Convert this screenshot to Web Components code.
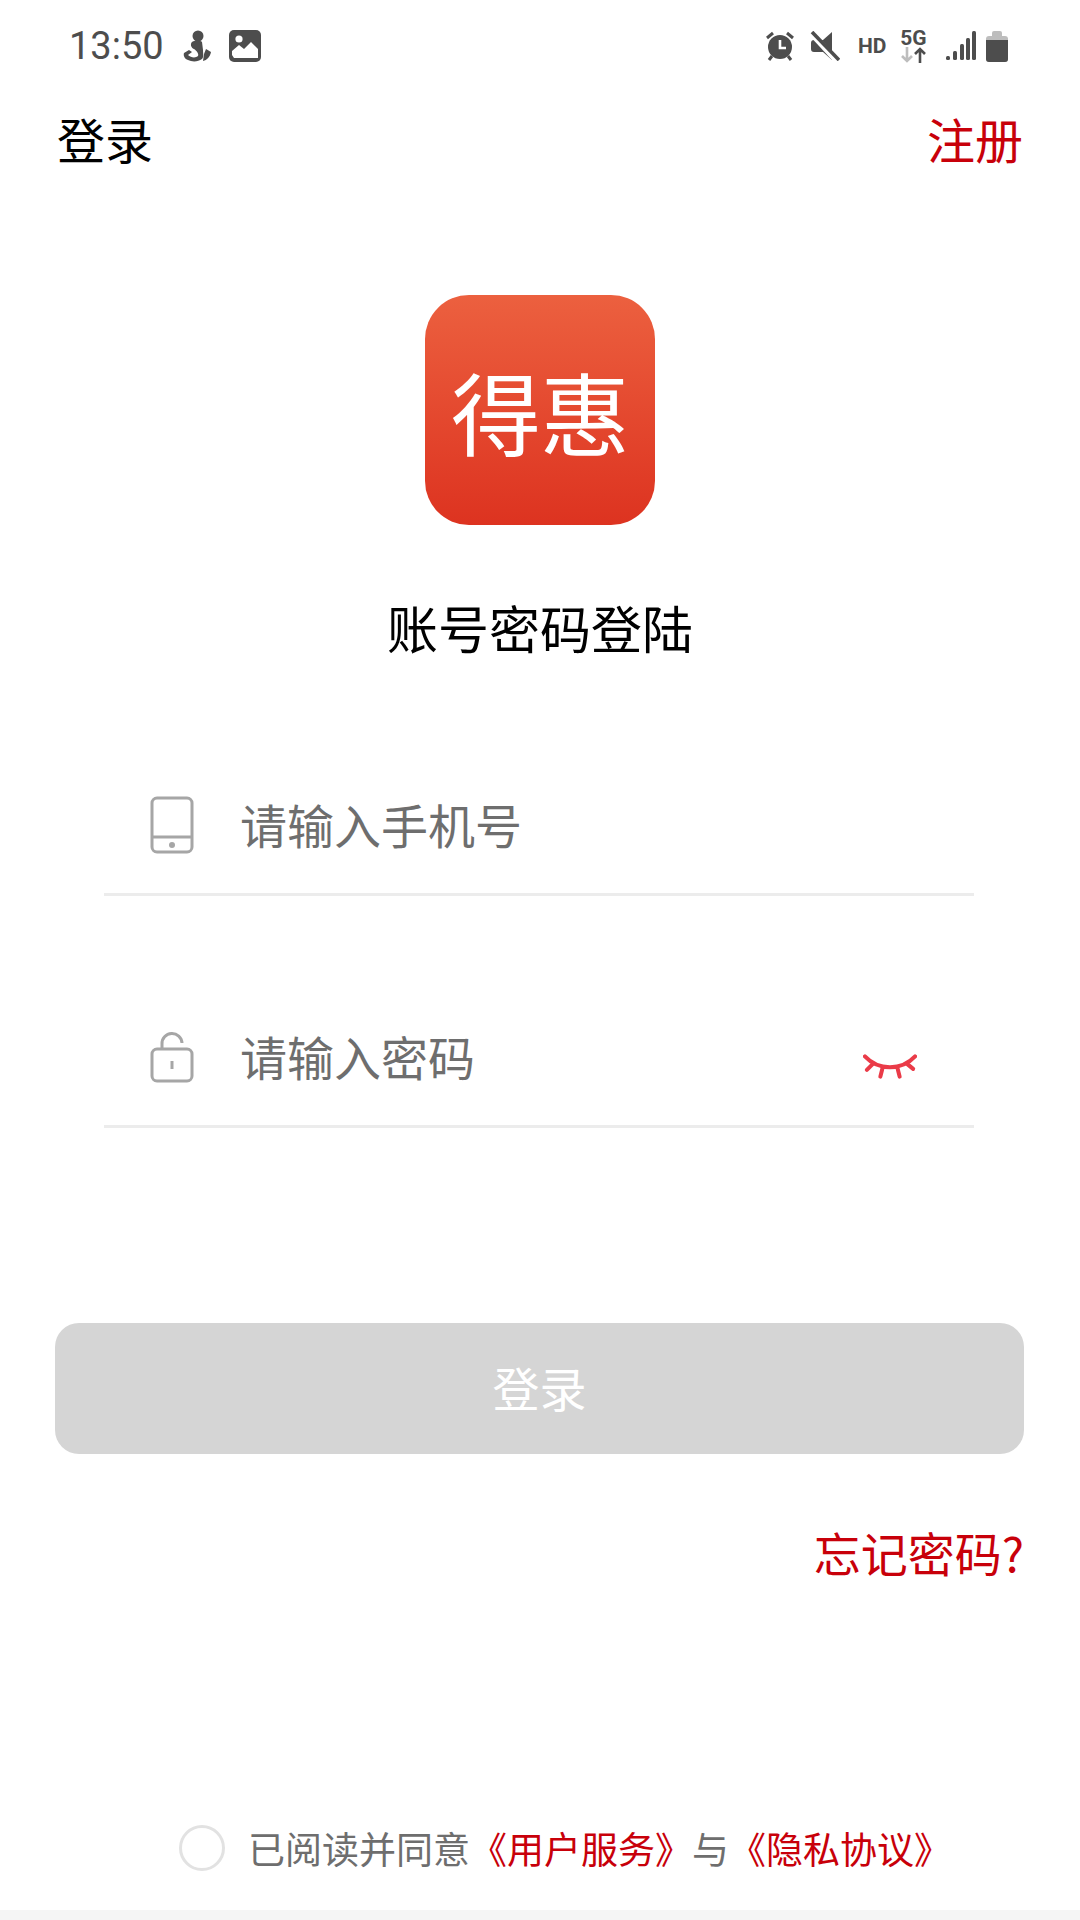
<!DOCTYPE html>
<html lang="zh">
<head>
<meta charset="utf-8">
<title>登录</title>
<style>
  html, body { margin: 0; padding: 0; background: #fff; }
  body { font-family: "Noto Sans CJK SC", "Noto Sans", sans-serif; text-spacing-trim: space-all; }
</style>
</head>
<body>
<login-page></login-page>

<script>
class StatusBar extends HTMLElement {
  constructor() {
    super();
    this.attachShadow({ mode: "open" });
    this.shadowRoot.innerHTML = `
      <style>
        :host { display: flex; align-items: center; height: 92px; padding: 0 72px 0 69px; color: #4d4d4d; box-sizing: border-box; }
        .time { font: 38px/44px Roboto, sans-serif; width: 96px; }
        svg { display: block; flex: none; }
        .left { display: flex; align-items: center; gap: 18px; }
        .right { display: flex; align-items: center; margin-left: auto; }
        .hd { font: bold 21px/20px Roboto, sans-serif; width: 28px; margin: 0 14px 0 18px; }
        .net { width: 27px; display: flex; flex-direction: column; align-items: center; margin-top: -1px; }
        .net b { font: bold 21px/18px Roboto, sans-serif; }
      </style>
      <div class="left">
        <span class="time">13:50</span>
        <svg width="28" height="32" viewBox="0 0 28 32" fill="#4d4d4d">
          <circle cx="15" cy="6" r="5.5"/>
          <path d="M9 12c3-2 8-2 10 0l1 8c0 4 1 7-1 9-4 3-10 3-14 1-3-1-5-4-4-7l5-3 3 2-4 3c3 3 8 3 10 1 1-2-1-5-4-7-3-1-4-5-2-7z"/>
          <path d="M21 24l2-5 5 3c-1 5-4 8-8 9z"/>
        </svg>
        <svg width="32" height="32" viewBox="0 0 32 32">
          <rect width="32" height="32" rx="5" fill="#4d4d4d"/>
          <circle cx="10" cy="9" r="3.6" fill="#fff"/>
          <path d="M3 25v-4l7-6 5 4 7-7 7 7v9H5z" fill="#fff"/>
        </svg>
      </div>
      <div class="right">
        <svg width="30" height="30" viewBox="0 0 30 30" fill="#4d4d4d">
          <circle cx="15" cy="16" r="12"/>
          <path d="M2 7l6-5M28 7l-6-5M7 25l-3 4M23 25l3 4" stroke="#4d4d4d" stroke-width="3" fill="none"/>
          <path d="M15 9v8h6" stroke="#fff" stroke-width="2.6" fill="none"/>
        </svg>
        <svg style="margin-left:15px" width="30" height="30" viewBox="0 0 30 30" fill="#4d4d4d">
          <path d="M22 1v28l-9-8H4q-3 0-3-3v-6q0-3 3-3h9z"/>
          <path d="M1 2l26 28" stroke="#fff" stroke-width="6"/>
          <path d="M2 1l27 28" stroke="#4d4d4d" stroke-width="3.6"/>
        </svg>
        <span class="hd">HD</span>
        <div class="net">
          <b>5G</b>
          <svg width="26" height="16" viewBox="0 0 26 16" fill="none" stroke-width="2.6">
            <path d="M6 0v14M1 9l5 5 5-5" stroke="#bdbdbd"/>
            <path d="M19 16V2M14 7l5-5 5 5" stroke="#4d4d4d"/>
          </svg>
        </div>
        <svg style="margin-left:19px" width="30" height="30" viewBox="0 0 30 30" fill="#4d4d4d">
          <rect x="0" y="25" width="4" height="4" rx="1.5"/>
          <rect x="7" y="20" width="4" height="9" rx="1.5"/>
          <rect x="14" y="13" width="4" height="16" rx="1.5"/>
          <rect x="20" y="7" width="4" height="22" rx="1.5"/>
          <rect x="26" y="0" width="4" height="29" rx="1.5"/>
        </svg>
        <svg style="margin-left:10px" width="22" height="32" viewBox="0 0 22 32">
          <path d="M6 3q0-2 2-2h6q2 0 2 2v3H6z" fill="#bdbdbd"/>
          <path d="M0 9q0-3 3-3h16q3 0 3 3v20q0 3-3 3H3q-3 0-3-3z" fill="#bdbdbd"/>
          <path d="M0 10h22v19q0 3-3 3H3q-3 0-3-3z" fill="#4d4d4d"/>
        </svg>
      </div>
    `;
  }
}

class AppHeader extends HTMLElement {
  constructor() {
    super();
    this.attachShadow({ mode: "open" });
    this.shadowRoot.innerHTML = `
      <style>
        :host { display: flex; justify-content: space-between; align-items: center; height: 96px; padding: 0 57px 5px 57px; box-sizing: border-box; font-size: 48px; color: #000; }
        .reg { color: #c8000a; }
      </style>
      <span>${this.getAttribute("title")}</span>
      <span class="reg">${this.getAttribute("action")}</span>
    `;
  }
}

class AppLogo extends HTMLElement {
  constructor() {
    super();
    this.attachShadow({ mode: "open" });
    this.shadowRoot.innerHTML = `
      <style>
        :host { display: flex; align-items: center; justify-content: center; width: 230px; height: 230px; border-radius: 44px;
          background: linear-gradient(#ec603f, #dd3320); color: #fff; font-size: 90px; line-height: 1; letter-spacing: -1px; }
      </style>
      <slot></slot>
    `;
  }
}

class LoginField extends HTMLElement {
  constructor() {
    super();
    this.attachShadow({ mode: "open" });
    this.shadowRoot.innerHTML = `
      <style>
        :host { display: flex; align-items: center; width: 870px; padding-left: 45px; border-bottom: 3px solid #ececec; box-sizing: border-box; height: 135px; color: #6e6e6e; font-size: 47px; }
        .icon { width: 46px; margin-right: 45px; display: flex; justify-content: center; margin-top: -5px; }
        .label { margin-top: -8px; }
        .tail { margin-left: auto; margin-right: 57px; display: flex; margin-top: 14px; }
      </style>
      <span class="icon"><slot name="icon"></slot></span>
      <span class="label">${this.getAttribute("placeholder")}</span>
      <span class="tail"><slot name="tail"></slot></span>
    `;
  }
}

class LoginButton extends HTMLElement {
  constructor() {
    super();
    this.attachShadow({ mode: "open" });
    this.shadowRoot.innerHTML = `
      <style>
        :host { display: flex; align-items: center; justify-content: center; width: 969px; height: 131px; padding-bottom: 5px; box-sizing: border-box; border-radius: 24px; background: #d5d5d5; color: #fff; font-size: 47px; }
      </style>
      <slot></slot>
    `;
  }
}

class AgreeLine extends HTMLElement {
  constructor() {
    super();
    this.attachShadow({ mode: "open" });
    this.shadowRoot.innerHTML = `
      <style>
        :host { display: flex; align-items: center; font-size: 37px; color: #6e6e6e; }
        .radio { width: 46px; height: 46px; border: 3px solid #e2e2e2; border-radius: 50%; box-sizing: border-box; margin-right: 23px; }
        em { font-style: normal; color: #c8000a; }
      </style>
      <span class="radio"></span>
      <span>已阅读并同意<em>《用户服务》</em>与<em>《隐私协议》</em></span>
    `;
  }
}

class LoginPage extends HTMLElement {
  constructor() {
    super();
    this.attachShadow({ mode: "open" });
    this.shadowRoot.innerHTML = `
      <style>
        :host { display: flex; flex-direction: column; align-items: center; width: 1080px; height: 1920px; background: #fff; overflow: hidden; }
        status-bar, app-header { align-self: stretch; }
        app-logo { margin-top: 107px; }
        .title { margin-top: 72px; font-size: 51px; line-height: 60px; color: #000; }
        .f1 { margin-top: 104px; align-self: flex-start; margin-left: 104px; }
        .f2 { margin-top: 97px; align-self: flex-start; margin-left: 104px; }
        login-button { margin-top: 195px; align-self: flex-start; margin-left: 55px; }
        .forgot { align-self: flex-end; margin: 70px 56px 0 0; font-size: 47px; line-height: 56px; color: #c8000a; }
        agree-line { margin-top: auto; margin-bottom: 35px; align-self: flex-start; margin-left: 179px; }
        .foot { align-self: stretch; height: 10px; background: #f5f5f5; flex: none; }
      </style>
      <status-bar></status-bar>
      <app-header title="登录" action="注册"></app-header>
      <app-logo>得惠</app-logo>
      <div class="title">账号密码登陆</div>
      <login-field class="f1" placeholder="请输入手机号">
        <svg slot="icon" width="44" height="58" viewBox="0 0 44 58" fill="none" stroke="#a6a6a6" stroke-width="3">
          <rect x="2" y="2" width="40" height="54" rx="5"/>
          <path d="M2 41h40"/>
          <circle cx="22" cy="49" r="3" fill="#a6a6a6" stroke="none"/>
        </svg>
      </login-field>
      <login-field class="f2" placeholder="请输入密码">
        <svg slot="icon" width="44" height="52" viewBox="0 0 44 52" fill="none" stroke="#a6a6a6" stroke-width="3">
          <rect x="2" y="18" width="40" height="32" rx="5"/>
          <path d="M12 18v-5a10 10 0 0 1 20-1"/>
          <path d="M22 30v8"/>
        </svg>
        <svg slot="tail" width="54" height="27" viewBox="0 0 56 27" fill="none" stroke="#ea3b48" stroke-width="4.2" stroke-linecap="round">
          <path d="M2 3c14 15 38 15 52 0"/>
          <path d="M10 11l-6 6M20 16l-2 8M36 16l2 8M46 11l6 5"/>
        </svg>
      </login-field>
      <login-button>登录</login-button>
      <div class="forgot">忘记密码?</div>
      <agree-line></agree-line>
      <div class="foot"></div>
    `;
  }
}

customElements.define("status-bar", StatusBar);
customElements.define("app-header", AppHeader);
customElements.define("app-logo", AppLogo);
customElements.define("login-field", LoginField);
customElements.define("login-button", LoginButton);
customElements.define("agree-line", AgreeLine);
customElements.define("login-page", LoginPage);
</script>
</body>
</html>
